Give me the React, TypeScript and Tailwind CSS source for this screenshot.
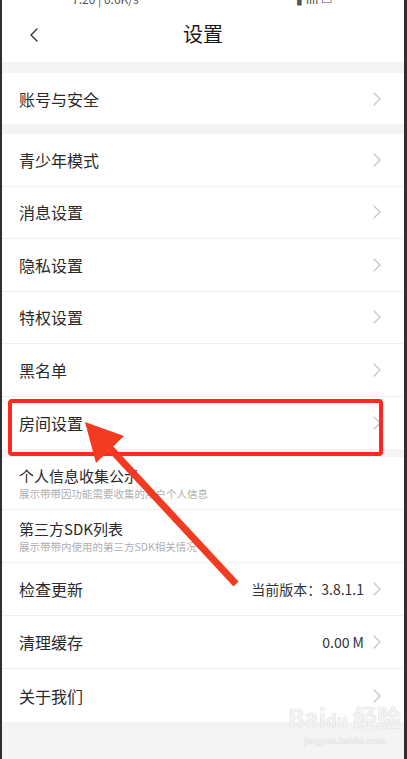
import { ChevronRight, ChevronLeft } from "lucide-react";

const font = { fontFamily: '"Noto Sans CJK SC", "Noto Sans", sans-serif' };

function Row({
  title,
  sub,
  value,
  last,
  hideArrow,
  height = "h-[52.5px]",
}: {
  title: string;
  sub?: string;
  value?: string;
  last?: boolean;
  hideArrow?: boolean;
  height?: string;
}) {
  return (
    <div className={`flex items-center bg-white pl-[17px] pr-[15px] ${height} ${last ? "" : "border-b border-[#efefef]"}`}>
      <div className="flex flex-1 flex-col">
        {sub ? (
          <>
            <span className="text-[15px] leading-[20px] text-[#2a2a2a]">{title}</span>
            <span className="mt-[1px] text-[10.5px] leading-[14px] text-[#b0b0b0]">{sub}</span>
          </>
        ) : (
          <span className="text-[16px] leading-[22px] text-[#2a2a2a]">{title}</span>
        )}
      </div>
      {value && <span className="mr-[1px] text-[14px] text-[#333]">{value}</span>}
      {!hideArrow && <ChevronRight size={24} strokeWidth={1.2} className="text-[#c4c4c4]" />}
    </div>
  );
}

export default function App() {
  return (
    <div className="relative flex h-[759px] w-[407px] overflow-hidden bg-[#2f2f2f]" style={font}>
      <div className="ml-[2px] mr-[3px] flex flex-1 flex-col bg-[#f4f4f4]">
        {/* Header */}
        <div className="relative h-[62px] bg-white">
          <div className="absolute -top-[8px] left-[70px] text-[12px] leading-[14px] text-[#555]">7:20 | 0.6K/s</div>
          <div className="absolute -top-[8px] right-[72px] text-[12px] leading-[14px] text-[#555]">▮ ıııı ▭</div>
          <div className="flex h-full items-end pb-[13px]">
            <ChevronLeft size={24} strokeWidth={1.4} className="ml-[20px] mb-[2px] text-[#333]" />
            <span className="flex-1 pr-[44px] text-center text-[20px] text-[#1a1a1a]">设置</span>
          </div>
        </div>

        <div className="mt-[11px]">
          <Row title="账号与安全" last height="h-[51px]" />
        </div>

        <div className="mt-[10px]">
          <Row title="青少年模式" />
          <Row title="消息设置" />
          <Row title="隐私设置" />
          <Row title="特权设置" />
          <Row title="黑名单" />
          <Row title="房间设置" last />
        </div>

        <div className="mt-[8px]">
          <Row title="个人信息收集公示" sub="展示带带因功能需要收集的用户个人信息" hideArrow height="h-[53px]" />
          <Row title="第三方SDK列表" sub="展示带带内使用的第三方SDK相关情况" hideArrow height="h-[53px]" />
          <Row title="检查更新" value="当前版本：3.8.1.1" height="h-[53px]" />
          <Row title="清理缓存" value="0.00 M" height="h-[53px]" />
          <Row title="关于我们" last height="h-[53px]" />
        </div>
      </div>

      {/* Annotation box */}
      <div className="absolute left-[8px] top-[399px] h-[57px] w-[375px] rounded-[4px] border-[4px] border-[#ff2a1c]" />

      {/* Annotation arrow */}
      <svg className="absolute left-0 top-0" width="407" height="759" viewBox="0 0 407 759">
        <line x1="108" y1="446" x2="236" y2="584" stroke="#f23b20" strokeWidth="7" />
        <polygon points="85,422 124,436 96,463" fill="#f23b20" />
      </svg>

      {/* Watermark */}
      <div
        className="absolute left-[288px] top-[703px] flex flex-col items-center text-[#f2f2f2]"
        style={{ textShadow: "0 0 1px #c4c4c4" }}
      >
        <span className="text-[24px] font-bold leading-[28px]">
          Bai<span className="text-[17px]">du</span> 经验
        </span>
        <span className="text-[11px] leading-[13px]" style={{ fontFamily: '"Liberation Serif", serif' }}>
          jingyan.baidu.com
        </span>
      </div>
    </div>
  );
}
